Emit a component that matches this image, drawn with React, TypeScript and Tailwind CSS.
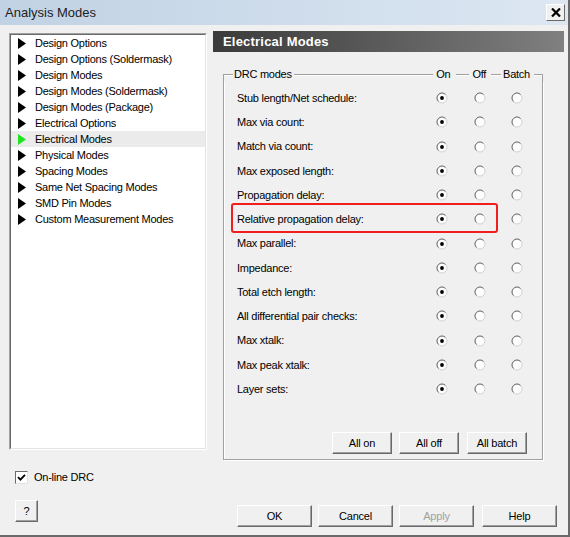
import React from 'react';

const treeItems = [
  'Design Options',
  'Design Options (Soldermask)',
  'Design Modes',
  'Design Modes (Soldermask)',
  'Design Modes (Package)',
  'Electrical Options',
  'Electrical Modes',
  'Physical Modes',
  'Spacing Modes',
  'Same Net Spacing Modes',
  'SMD Pin Modes',
  'Custom Measurement Modes',
];

const modes = [
  'Stub length/Net schedule:',
  'Max via count:',
  'Match via count:',
  'Max exposed length:',
  'Propagation delay:',
  'Relative propagation delay:',
  'Max parallel:',
  'Impedance:',
  'Total etch length:',
  'All differential pair checks:',
  'Max xtalk:',
  'Max peak xtalk:',
  'Layer sets:',
];

const Arrow = ({ color }: { color: string }) => (
  <svg width="8" height="11" viewBox="0 0 8 11" className="shrink-0">
    <polygon points="0,0 8,5.5 0,11" fill={color} />
  </svg>
);

const Radio = ({ checked }: { checked?: boolean }) => (
  <svg width="12" height="12" viewBox="0 0 12 12">
    <circle cx="6" cy="6" r="5" fill="#fdfdfd" stroke="#d2d2d2" />
    <path d="M2.46 9.54 A5 5 0 0 1 9.54 2.46" fill="none" stroke="#6e6e6e" />
    {checked && <circle cx="6" cy="6" r="1.9" fill="#000" />}
  </svg>
);

const WinButton = ({ label, className = '', disabled }: { label: string; className?: string; disabled?: boolean }) => (
  <button
    className={`h-[22px] bg-[#f0f0f0] border border-t-white border-l-white border-r-[#696969] border-b-[#696969] shadow-[inset_-1px_-1px_0_#a0a0a0] text-[11px] tracking-[-0.2px] leading-none ${
      disabled ? 'text-[#a0a0a0]' : 'text-black'
    } ${className}`}
  >
    {label}
  </button>
);

const Line = ({ className = '' }: { className?: string }) => (
  <div className={`h-px bg-[#a0a0a0] shadow-[0_1px_0_#fff] ${className}`} />
);

export default function App() {
  return (
    <div
      className="w-[570px] h-[537px] bg-[#f0f0f0] flex flex-col border-r-2 border-b-2 border-[#6a6a6a] overflow-hidden"
      style={{ fontFamily: '"Liberation Sans", Arial, sans-serif' }}
    >
      {/* title bar */}
      <div className="h-[25px] shrink-0 flex items-center justify-between pl-[5px] pr-[3px] bg-gradient-to-r from-[#c1d2e4] to-[#dce7f2]">
        <span className="text-[13px] text-[#1c1c1c]">Analysis Modes</span>
        <div className="w-[19px] h-[17px] bg-[#f0f0f0] border border-t-white border-l-white border-r-[#696969] border-b-[#696969] flex items-center justify-center">
          <svg width="10" height="9" viewBox="0 0 10 9">
            <path d="M1 0.5 L9 8.5 M9 0.5 L1 8.5" stroke="#000" strokeWidth="2.2" />
          </svg>
        </div>
      </div>

      <div className="flex flex-1">
        {/* left column */}
        <div className="ml-[9px] pt-[8px] flex flex-col w-[198px]">
          <div className="h-[417px] border border-t-[#a0a0a0] border-l-[#a0a0a0] border-r-white border-b-white">
            <div className="h-full bg-white border border-t-[#696969] border-l-[#696969] border-r-[#e3e3e3] border-b-[#e3e3e3]">
              {treeItems.map((item) => {
                const sel = item === 'Electrical Modes';
                return (
                  <div
                    key={item}
                    className={`h-[16px] flex items-center pl-[7px] ${sel ? 'bg-[#ebebeb]' : ''}`}
                  >
                    <Arrow color={sel ? '#1ee61e' : '#000'} />
                    <span className="ml-[9px] text-[11px] tracking-[-0.25px] text-black whitespace-nowrap">{item}</span>
                  </div>
                );
              })}
            </div>
          </div>

          <div className="mt-[21px] ml-[6px] flex items-center h-[13px]">
            <div className="w-[13px] h-[13px] bg-white border border-t-[#696969] border-l-[#696969] border-r-[#e3e3e3] border-b-[#e3e3e3] flex items-center justify-center">
              <svg width="9" height="9" viewBox="0 0 9 9">
                <path d="M1 4.2 L3.4 6.6 L8 1.8" fill="none" stroke="#000" strokeWidth="1.8" />
              </svg>
            </div>
            <span className="ml-[6px] text-[11px] tracking-[-0.25px] text-black">On-line DRC</span>
          </div>

          <WinButton label="?" className="mt-[16px] ml-[6px] w-[23px]" />
        </div>

        {/* right column */}
        <div className="ml-[6px] pt-[6px] flex flex-col w-[351px]">
          <div className="h-[21px] flex items-center pl-[10px] bg-gradient-to-r from-[#3b3b3b] to-[#808080]">
            <span className="text-[13px] font-bold text-white tracking-[0.2px]">Electrical Modes</span>
          </div>

          {/* group box */}
          <div className="mt-[15px] ml-[10px] w-[320px] flex flex-col">
            <div className="h-[14px] flex items-center text-[11px] tracking-[-0.25px] text-black">
              <div className="w-px h-[7px] self-end bg-[#a0a0a0]" />
              <Line className="w-[9px]" />
              <span className="px-px">DRC modes</span>
              <Line className="flex-1 ml-px" />
              <span className="ml-[3px]">On</span>
              <Line className="w-[13px] ml-[6px]" />
              <span className="ml-[3px]">Off</span>
              <Line className="w-[10px] ml-[5px]" />
              <span className="ml-[2px]">Batch</span>
              <Line className="w-[8px] ml-[4px]" />
              <div className="w-px h-[7px] self-end bg-[#a0a0a0]" />
            </div>
            <div className="h-[379px] border border-t-0 border-[#a0a0a0] shadow-[inset_1px_0_0_#fff,1px_1px_0_#fff] flex flex-col pt-[5px]">
              {modes.map((m, i) => (
                <div key={m} className="h-[24.25px] flex items-center relative">
                  <span className="w-[206px] pl-[13px] text-[11px] tracking-[-0.25px] text-black whitespace-nowrap">{m}</span>
                  <div className="w-[24px] flex justify-center">
                    <Radio checked />
                  </div>
                  <div className="w-[24px] ml-[14px] flex justify-center">
                    <Radio />
                  </div>
                  <div className="w-[24px] ml-[13px] flex justify-center">
                    <Radio />
                  </div>
                  {i === 5 && (
                    <div className="absolute left-[7px] top-[-4px] w-[267px] h-[30px] border-2 border-[#f21d1d] rounded-[3px]" />
                  )}
                </div>
              ))}
              <div className="mt-auto mb-[5px] flex pl-[108px]">
                <WinButton label="All on" className="w-[60px]" />
                <WinButton label="All off" className="w-[60px] ml-[7px]" />
                <WinButton label="All batch" className="w-[60px] ml-[8px]" />
              </div>
            </div>
          </div>

          <div className="mt-[45px] flex pl-[24px]">
            <WinButton label="OK" className="w-[75px]" />
            <WinButton label="Cancel" className="w-[75px] ml-[6px]" />
            <WinButton label="Apply" className="w-[75px] ml-[6px]" disabled />
            <WinButton label="Help" className="w-[75px] ml-[8px]" />
          </div>
        </div>
      </div>
    </div>
  );
}
